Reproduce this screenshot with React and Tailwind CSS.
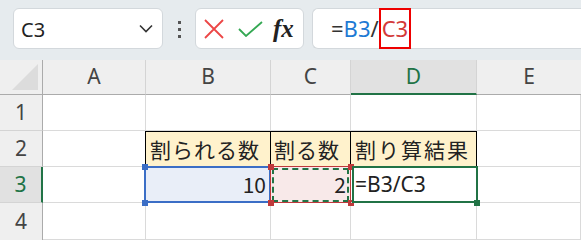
import React from "react";

const GRID = "border-r border-b border-[#dadada]";

function Handle({ className }) {
  return <div className={"absolute w-[6px] h-[6px] " + className} />;
}

export default function App() {
  const cols = "grid-cols-[43px_103px_125px_80px_126px_104px]";
  const jp = { fontFamily: '"Noto Sans CJK JP", "Noto Sans", sans-serif' };
  return (
    <div className="w-[581px] h-[240px] overflow-hidden bg-white" style={jp}>
      {/* toolbar */}
      <div className="h-[60px] bg-[#e6ebee] flex items-start pt-[8px] pl-[13px] gap-0">
        <div className="w-[150px] h-[41px] bg-white rounded-[6px] border border-[#d3d8dc] flex items-center justify-between pl-[7px] pr-[9px]">
          <span className="text-[20px] text-[#222] pt-[3px]" style={{ fontFamily: '"Noto Sans", sans-serif' }}>C3</span>
          <svg width="14" height="9" viewBox="0 0 14 9"><path d="M1 1.5 L7 7.5 L13 1.5" fill="none" stroke="#333" strokeWidth="1.6" /></svg>
        </div>
        <div className="w-[32px] h-[41px] flex flex-col items-center justify-center gap-[4px] pt-[2px]">
          <div className="w-[3px] h-[3px] bg-[#555]" />
          <div className="w-[3px] h-[3px] bg-[#555]" />
          <div className="w-[3px] h-[3px] bg-[#555]" />
        </div>
        <div className="w-[109px] h-[41px] bg-white rounded-[6px] border border-[#d3d8dc] flex items-center pl-[8px]">
          <svg width="20" height="20" viewBox="0 0 20 20"><path d="M1 1 L19 19 M19 1 L1 19" stroke="#ec4646" strokeWidth="1.8" fill="none" /></svg>
          <svg className="ml-[14px]" width="25" height="16" viewBox="0 0 25 16"><path d="M1 8 L8 15 L24 1" stroke="#34a853" strokeWidth="1.8" fill="none" /></svg>
          <span className="ml-[10px] text-[25px] italic font-semibold text-[#222] leading-none" style={{ fontFamily: '"Liberation Serif", serif' }}>fx</span>
        </div>
        <div className="ml-[8px] flex-1 h-[41px] bg-white rounded-l-[6px] border border-r-0 border-[#d3d8dc] flex items-center pl-[18px] text-[22px]" style={{ fontFamily: '"Noto Sans", sans-serif' }}>
          <span className="text-[#333]">=</span>
          <span className="text-[#1e7ad4]">B3</span>
          <span className="text-[#333]">/</span>
          <span className="text-[#d33a3a] border-2 border-[#ee0000] h-[41px] flex items-center px-[1px] -my-px">C3</span>
        </div>
      </div>

      {/* sheet */}
      <div className={"grid " + cols + " grid-rows-[35px_36px_36px_36px_37px] text-[21px] text-[#222]"}>
        {/* header row */}
        <div className="bg-[#efefef] border-r border-b border-[#ababab] relative">
          <svg className="absolute right-[4px] bottom-[4px]" width="26" height="26" viewBox="0 0 26 26"><path d="M26 0 L26 26 L0 26 Z" fill="#dcdcdc" /></svg>
        </div>
        {["A", "B", "C"].map((c) => (
          <div key={c} className="bg-[#efefef] border-r border-[#d4d4d4] border-b border-b-[#ababab] flex items-center justify-center text-[#444] text-[21px]" style={{ fontFamily: '"Noto Sans", sans-serif' }}>{c}</div>
        ))}
        <div className="bg-[#e1e1e1] border-r border-[#d4d4d4] border-b-2 border-b-[#217346] flex items-center justify-center text-[#217346] text-[21px] pt-[1px]" style={{ fontFamily: '"Noto Sans", sans-serif' }}>D</div>
        <div className="bg-[#efefef] border-b border-[#ababab] flex items-center justify-center text-[#444] text-[21px]" style={{ fontFamily: '"Noto Sans", sans-serif' }}>E</div>

        {/* row 1 */}
        <div className="bg-[#efefef] border-r border-[#ababab] border-b border-b-[#d4d4d4] flex items-center justify-center text-[#444]" style={{ fontFamily: '"Noto Sans", sans-serif' }}>1</div>
        <div className={GRID} /><div className={GRID} /><div className={GRID} /><div className={GRID} /><div className={GRID} />

        {/* row 2 */}
        <div className="bg-[#efefef] border-r border-[#ababab] border-b border-b-[#d4d4d4] flex items-center justify-center text-[#444]" style={{ fontFamily: '"Noto Sans", sans-serif' }}>2</div>
        <div className={GRID} />
        <div className="bg-[#fff2cc] border-l border-r border-t border-black -ml-px flex items-center pl-[4px] tracking-[1px]">割られる数</div>
        <div className="bg-[#fff2cc] border-r border-t border-black flex items-center pl-[3px] tracking-[1px]">割る数</div>
        <div className="bg-[#fff2cc] border-r border-t border-black flex items-center pl-[4px] tracking-[2px]">割り算結果</div>
        <div className={GRID} />

        {/* row 3 */}
        <div className="bg-[#e1e1e1] border-r-2 border-[#217346] border-b border-b-[#d4d4d4] flex items-center justify-center text-[#217346]" style={{ fontFamily: '"Noto Sans", sans-serif' }}>3</div>
        <div className={GRID} />
        <div className="relative bg-[#e9eef8] border-r border-b border-[#dadada]">
          <div className="absolute -left-[2px] -top-px right-[-1px] bottom-[-1px] border-2 border-[#3b6ec6]" />
          <Handle className="bg-[#3b6ec6] -left-[4px] -top-[3px]" />
          <Handle className="bg-[#3b6ec6] -left-[4px] -bottom-[4px]" />
          <div className="absolute inset-0 flex items-center justify-end pr-[4px]">10</div>
        </div>
        <div className="relative bg-[#f8e9e9] border-r border-b border-[#dadada]">
          <div className="absolute -left-[1px] -top-px right-[-1px] bottom-[-1px] border border-[#c0393b]" />
          <div className="absolute left-[1px] top-[1px] right-[1px] bottom-[0px] border-2 border-dashed border-[#217346]" />
          <Handle className="bg-[#c0393b] -left-[3px] -top-[3px]" />
          <Handle className="bg-[#c0393b] -left-[3px] -bottom-[4px]" />
          <Handle className="bg-[#c0393b] -right-[4px] -top-[3px]" />
          <Handle className="bg-[#c0393b] -right-[4px] -bottom-[4px]" />
          <div className="absolute inset-0 flex items-center justify-end pr-[4px]">2</div>
        </div>
        <div className="relative border-r border-b border-[#dadada]">
          <div className="absolute left-[1px] -top-px right-[-2px] bottom-[-1px] border-2 border-[#217346]" />
          <Handle className="bg-[#217346] -right-[4px] -bottom-[4px]" />
          <div className="absolute inset-0 flex items-center pl-[4px]" style={{ fontFamily: '"Noto Sans", sans-serif' }}>=B3/C3</div>
        </div>
        <div className={GRID} />

        {/* row 4 */}
        <div className="bg-[#efefef] border-r border-[#ababab] flex items-center justify-center text-[#444]" style={{ fontFamily: '"Noto Sans", sans-serif' }}>4</div>
        <div className={GRID} /><div className={GRID} /><div className={GRID} /><div className={GRID} /><div className={GRID} />
      </div>
    </div>
  );
}
